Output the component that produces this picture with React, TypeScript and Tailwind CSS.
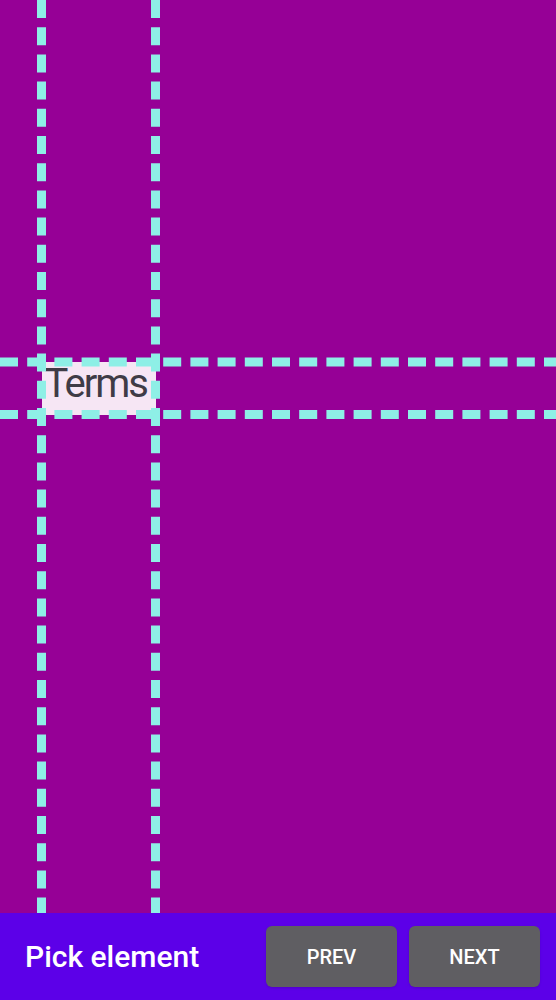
import React from "react";

const DASH = "18 9.2";

export default function App() {
  return (
    <div className="flex h-[1000px] w-full flex-col font-['Roboto',sans-serif]">
      {/* Canvas with highlighted element */}
      <div className="relative flex-1 overflow-hidden bg-[#960096] pl-[41.5px] pt-[362px]">
        <div className="h-[52.5px] w-[114px] bg-[#f6e6f4] pl-[3px]">
          <span className="block text-[40px] leading-[44px] tracking-[-2px] text-[#3f3c46]">
            Terms
          </span>
        </div>

        {/* Bounds guides */}
        <svg className="pointer-events-none absolute inset-0 h-full w-full">
          <line x1="41.5" y1="0" x2="41.5" y2="1000" stroke="#8eefe6" strokeWidth="9" strokeDasharray={DASH} />
          <line x1="155.5" y1="0" x2="155.5" y2="1000" stroke="#8eefe6" strokeWidth="9" strokeDasharray={DASH} />
          <line x1="0" y1="362" x2="556" y2="362" stroke="#8eefe6" strokeWidth="9" strokeDasharray={DASH} />
          <line x1="0" y1="414.5" x2="556" y2="414.5" stroke="#8eefe6" strokeWidth="9" strokeDasharray={DASH} />
        </svg>
      </div>

      {/* Bottom bar */}
      <div className="flex h-[87px] items-center justify-between bg-[#5c00e8] pl-[25px] pr-[16px]">
        <span className="text-[30px] font-medium text-white">Pick element</span>
        <div className="flex gap-[12px]">
          <button className="h-[61px] w-[131px] rounded-[6px] bg-[#5f5e62] text-[20px] font-medium text-white shadow-sm">
            PREV
          </button>
          <button className="h-[61px] w-[131px] rounded-[6px] bg-[#5f5e62] text-[20px] font-medium text-white shadow-sm">
            NEXT
          </button>
        </div>
      </div>
    </div>
  );
}
